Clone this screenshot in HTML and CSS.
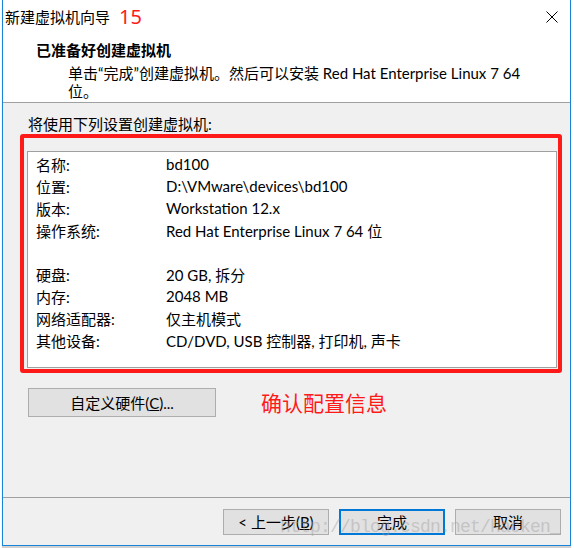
FILE: index.html
```html
<!DOCTYPE html>
<html lang="zh-CN">
<head>
<meta charset="utf-8">
<title>新建虚拟机向导</title>
<link rel="stylesheet" href="styles.css">
</head>
<body>
<div class="window">
  <div class="titlebar">
    <span class="title">新建虚拟机向导</span>
    <span class="step">15</span>
    <span class="close" aria-label="关闭">
      <svg width="12" height="12" viewBox="0 0 12 12"><path d="M0.5 0.5 L11.5 11.5 M11.5 0.5 L0.5 11.5" stroke="#000" stroke-width="1" fill="none"/></svg>
    </span>
  </div>
  <div class="header">
    <div class="heading">已准备好创建虚拟机</div>
    <div class="subtitle">单击“完成”创建虚拟机。然后可以安装 Red Hat Enterprise Linux 7 64<br>位。</div>
  </div>
  <div class="content">
    <div class="caption">将使用下列设置创建虚拟机:</div>
    <div class="summary">
      <div class="row"><span class="label">名称:</span><span class="value">bd100</span></div>
      <div class="row"><span class="label">位置:</span><span class="value">D:\VMware\devices\bd100</span></div>
      <div class="row"><span class="label">版本:</span><span class="value">Workstation 12.x</span></div>
      <div class="row"><span class="label">操作系统:</span><span class="value">Red Hat Enterprise Linux 7 64 位</span></div>
      <div class="row blank"></div>
      <div class="row"><span class="label">硬盘:</span><span class="value">20 GB, 拆分</span></div>
      <div class="row"><span class="label">内存:</span><span class="value">2048 MB</span></div>
      <div class="row"><span class="label">网络适配器:</span><span class="value">仅主机模式</span></div>
      <div class="row"><span class="label">其他设备:</span><span class="value">CD/DVD, USB 控制器, 打印机, 声卡</span></div>
      <div class="highlight"></div>
    </div>
    <div class="custom-row">
      <button class="btn custom">自定义硬件(<u>C</u>)...</button>
      <span class="note">确认配置信息</span>
    </div>
  </div>
  <div class="footer">
    <button class="btn nav">&lt; 上一步(<u>B</u>)</button>
    <button class="btn nav primary">完成</button>
    <button class="btn nav">取消</button>
    <span class="watermark" aria-hidden="true">http://blog.csdn.net/hacken_</span>
  </div>
</div>
</body>
</html>
```
FILE: styles.css
```css
html, body {
  margin: 0;
  padding: 0;
  background: #ffffff;
}
body {
  width: 574px;
  height: 548px;
  overflow: hidden;
  font-family: "Lato", "Noto Sans CJK SC", sans-serif;
  font-size: 15px;
  color: #000;
}
.window {
  box-sizing: border-box;
  margin-left: 2px;
  width: 569px;
  height: 546px;
  border: 1px solid #1883d7;
  border-top: none;
  display: flex;
  flex-direction: column;
  background: #fff;
  box-shadow: 0 2px 1px rgba(0,0,0,0.18);
}
.titlebar {
  height: 34px;
  display: flex;
  align-items: center;
  padding-left: 2px;
  position: relative;
}
.title {
  line-height: 20px;
}
.step {
  color: #ff1a1a;
  font-family: "Noto Sans", sans-serif;
  font-size: 20px;
  margin-left: 9px;
  line-height: 20px;
}
.close {
  margin-left: auto;
  margin-right: 12px;
  width: 12px;
  height: 12px;
  display: flex;
}
.header {
  height: 69px;
  box-sizing: border-box;
  padding: 6px 0 0 33px;
  border-bottom: 1px solid #a0a0a0;
}
.heading {
  font-weight: bold;
  line-height: 20px;
}
.subtitle {
  margin-top: 4px;
  margin-left: 32px;
  line-height: 18px;
}
.content {
  flex: 1;
  background: #f0f0f0;
  padding: 12px 0 0 24px;
}
.caption {
  line-height: 18px;
  padding-left: 1px;
}
.summary {
  position: relative;
  margin-top: 18px;
  width: 528px;
  height: 214px;
  background: #fff;
  border: 1px solid #a0a0a0;
  padding-top: 1px;
  box-sizing: content-box;
}
.summary .row {
  display: flex;
  height: 22px;
  align-items: center;
  padding-left: 8px;
}
.label {
  width: 130px;
  flex: none;
}
.highlight {
  position: absolute;
  left: -8px;
  top: -18px;
  width: 534px;
  height: 231px;
  border: 4px solid #ff1a1a;
  border-radius: 3px;
  pointer-events: none;
}
.custom-row {
  display: flex;
  align-items: center;
  margin-top: 20px;
  margin-left: 1px;
}
.btn {
  font-family: "Lato", "Noto Sans CJK SC", sans-serif;
  font-size: 15px;
  background: #e1e1e1;
  border: 1px solid #adadad;
  color: #000;
  padding: 0;
  box-sizing: border-box;
  line-height: 20px;
}
.btn u {
  text-decoration: underline;
}
.custom {
  width: 188px;
  height: 29px;
}
.note {
  margin-left: 45px;
  color: #ff1a1a;
  font-size: 21px;
  line-height: 24px;
}
.footer {
  position: relative;
  height: 48px;
  box-sizing: border-box;
  border-top: 1px solid #a0a0a0;
  background: #f0f0f0;
  display: flex;
  justify-content: flex-end;
  align-items: flex-start;
  gap: 10px;
  padding: 11px 9px 0 0;
}
.nav {
  width: 106px;
  height: 26px;
}
.primary {
  border: 2px solid #0078d7;
}
.watermark {
  position: absolute;
  left: 277px;
  top: 19px;
  font-family: "Liberation Mono", monospace;
  font-size: 18px;
  letter-spacing: -0.8px;
  color: rgba(160,160,160,0.45);
  pointer-events: none;
  white-space: nowrap;
}
```
